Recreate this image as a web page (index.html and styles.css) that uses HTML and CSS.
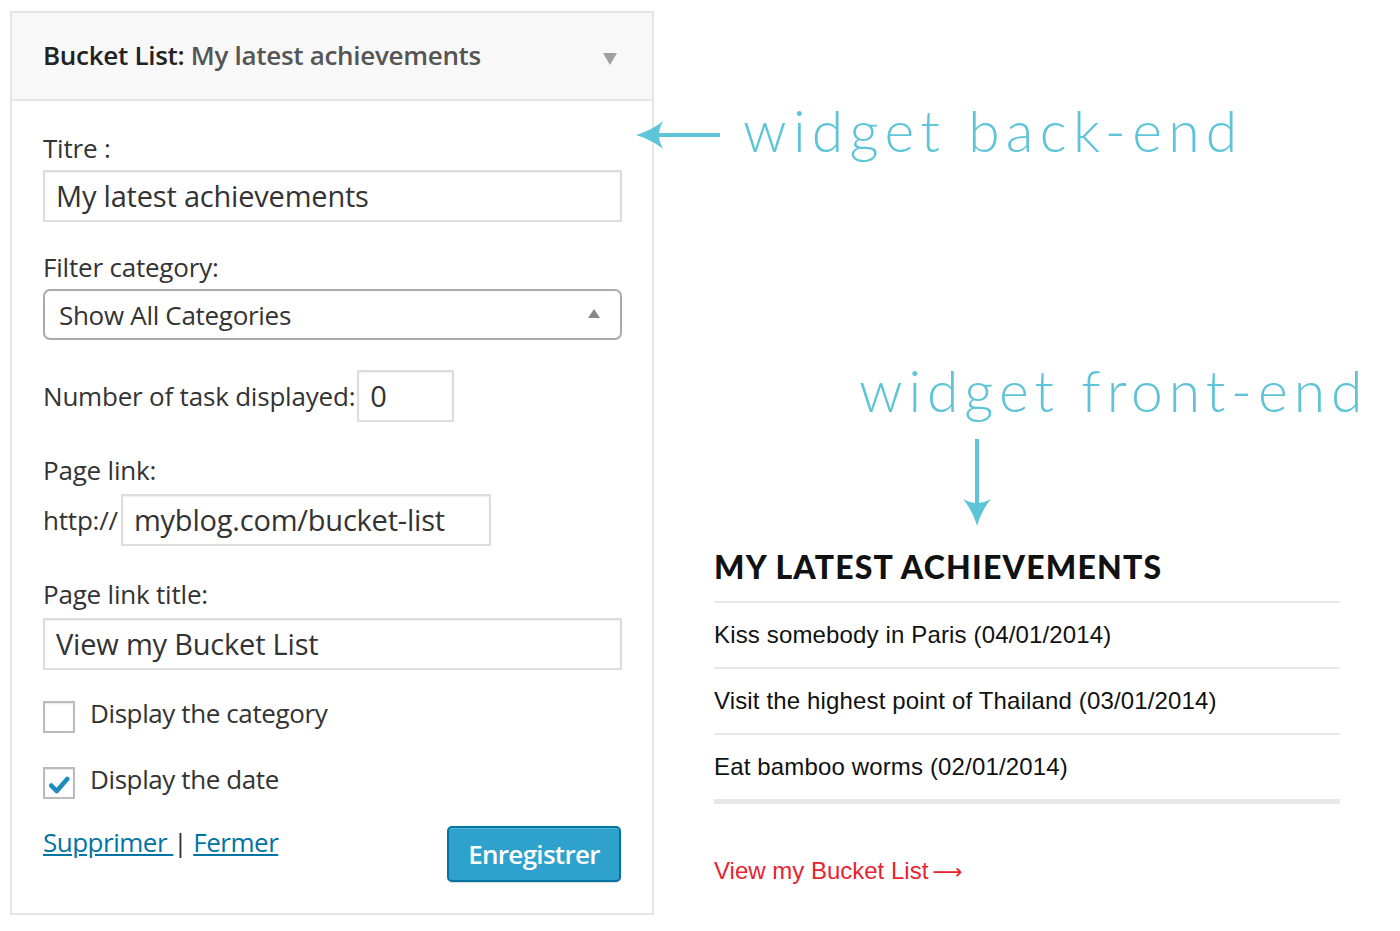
FILE: index.html
```html
<!DOCTYPE html>
<html lang="fr">
<head>
<meta charset="utf-8">
<title>Bucket List widget</title>
<link rel="stylesheet" href="styles.css">
</head>
<body>
<div class="page">
  <section class="panel">
    <header class="panel-head">
      <h4 class="panel-title">Bucket List:<span class="panel-title-sub"> My latest achievements</span></h4>
      <span class="panel-toggle"></span>
    </header>
    <div class="panel-body">
      <label class="label label-first">Titre :</label>
      <div class="input input-full">My latest achievements</div>

      <label class="label">Filter category:</label>
      <div class="select">
        <span>Show All Categories</span>
        <span class="select-arrow"></span>
      </div>

      <div class="row row-number">
        <span class="row-label">Number of task displayed:</span>
        <div class="input input-small">0</div>
      </div>

      <label class="label label-page">Page link:</label>
      <div class="row row-link">
        <span class="row-label">http://</span>
        <div class="input input-link">myblog.com/bucket-list</div>
      </div>

      <label class="label label-page">Page link title:</label>
      <div class="input input-full">View my Bucket List</div>

      <div class="check check-first">
        <span class="box"></span>
        <span class="check-label">Display the category</span>
      </div>
      <div class="check">
        <span class="box">
          <svg class="tick" viewBox="0 0 20 20" width="22" height="22"><path d="M3 10.5 L8 15.5 L17.5 4.5" fill="none" stroke="#1e8cbe" stroke-width="4.2" stroke-linecap="round" stroke-linejoin="round"/></svg>
        </span>
        <span class="check-label">Display the date</span>
      </div>

      <div class="panel-foot">
        <div class="links"><a class="link" href="#">Supprimer </a><span class="sep"> | </span><a class="link" href="#">Fermer</a></div>
        <button class="btn" type="button">Enregistrer</button>
      </div>
    </div>
  </section>

  <section class="front">
    <h2 class="front-title">MY LATEST ACHIEVEMENTS</h2>
    <ul class="front-list">
      <li>Kiss somebody in Paris (04/01/2014)</li>
      <li>Visit the highest point of Thailand (03/01/2014)</li>
      <li>Eat bamboo worms (02/01/2014)</li>
    </ul>
    <a class="front-link" href="#"><span>View my Bucket List</span><span class="front-arrow">&#10230;</span></a>
  </section>

  <div class="note note-back">
    <svg class="arrow-left" width="86" height="32" viewBox="0 0 86 32">
      <path d="M20 16 H84" stroke="#5ec4d8" stroke-width="4" fill="none"/>
      <path d="M0 16 C10 13 20 8 27 2 C24 8 23 12 23 16 C23 20 24 24 27 30 C20 24 10 19 0 16 Z" fill="#5ec4d8"/>
    </svg>
    <span class="note-text note-text-back">widget back-end</span>
  </div>

  <div class="note note-front">
    <span class="note-text note-text-front">widget front-end</span>
    <svg class="arrow-down" width="32" height="88" viewBox="0 0 32 88">
      <path d="M16 0 V70" stroke="#5ec4d8" stroke-width="4" fill="none"/>
      <path d="M16 87 C13 77 8 67 2 60 C8 63 12 64 16 64 C20 64 24 63 30 60 C24 67 19 77 16 87 Z" fill="#5ec4d8"/>
    </svg>
  </div>
</div>
</body>
</html>
```

FILE: styles.css
```css
* { box-sizing: border-box; }
html, body { margin: 0; padding: 0; background: #fff; }
body { font-family: "Open Sans", "Liberation Sans", sans-serif; color: #333; }

.page {
  position: relative;
  width: 1400px;
  height: 931px;
  display: flex;
  align-items: flex-start;
}

/* ---------- back-end panel ---------- */
.panel {
  margin: 11px 0 0 10px;
  width: 644px;
  height: 904px;
  border: 2px solid #e5e5e5;
  background: #fff;
  flex: none;
}
.panel-head {
  height: 88px;
  background: #f8f8f8;
  border-bottom: 2px solid #e5e5e5;
  display: flex;
  align-items: center;
  justify-content: space-between;
  padding: 0 35px 0 31px;
}
.panel-title {
  margin: -3px 0 0;
  font-size: 26px;
  font-weight: 600;
  color: #222;
  letter-spacing: -0.3px;
}
.panel-title-sub { color: #555; }
.panel-toggle {
  width: 0; height: 0;
  border-left: 7px solid transparent;
  border-right: 7px solid transparent;
  border-top: 12px solid #a0a0a0;
  margin-top: 6px;
}
.panel-body { padding: 0 31px; }

.label {
  display: block;
  font-size: 26px;
  line-height: 30px;
  color: #333;
  margin: 30px 0 7px;
  letter-spacing: -0.2px;
}
.label-first { margin-top: 32px; }
.label-page { margin-top: 33px; margin-bottom: 9px; }

.input {
  height: 52px;
  border: 2px solid #ddd;
  box-shadow: inset 0 1px 2px rgba(0,0,0,0.07);
  background: #fff;
  font-size: 29px;
  line-height: 48px;
  padding: 0 11px;
  color: #333;
  letter-spacing: -0.2px;
  white-space: nowrap;
}
.input-full { width: 579px; }
.input-small { width: 97px; }
.input-link { width: 370px; }

.select {
  width: 579px;
  height: 51px;
  border: 2px solid #aaa;
  border-radius: 7px;
  display: flex;
  align-items: center;
  justify-content: space-between;
  padding: 0 20px 0 14px;
  font-size: 26px;
  color: #333;
  letter-spacing: -0.3px;
}
.select-arrow {
  width: 0; height: 0;
  border-left: 6px solid transparent;
  border-right: 6px solid transparent;
  border-bottom: 9px solid #888;
  margin-bottom: 2px;
}

.row { display: flex; align-items: center; }
.row-number { margin-top: 30px; gap: 2px; }
.row-link { gap: 3px; }
.row-label { font-size: 26px; color: #333; letter-spacing: -0.2px; }

.check { display: flex; align-items: flex-start; gap: 15px; margin-top: 34px; height: 32px; }
.check-first { margin-top: 31px; }
.box {
  width: 32px; height: 32px;
  border: 2px solid #bbb;
  box-shadow: inset 0 1px 2px rgba(0,0,0,0.1);
  display: flex; align-items: center; justify-content: center;
  background: #fff;
  flex: none;
}
.tick { display: block; margin-top: 3px; }
.check-label { font-size: 26px; line-height: 32px; margin-top: -4px; color: #333; letter-spacing: -0.4px; }

.panel-foot {
  display: flex;
  justify-content: space-between;
  align-items: flex-start;
  margin-top: 27px;
}
.links { font-size: 26px; line-height: 32px; color: #333; letter-spacing: -0.5px; }
.link { color: #0074a2; text-decoration: underline; }
.sep { color: #333; }
.btn {
  width: 174px;
  height: 56px;
  background: #2ea2cc;
  border: 2px solid #0074a2;
  border-radius: 5px;
  box-shadow: inset 0 1px 0 rgba(120,200,230,0.5), 0 1px 0 rgba(0,0,0,0.15);
  color: #fff;
  font-family: "Open Sans", sans-serif;
  font-size: 26px;
  font-weight: 600;
  letter-spacing: -0.7px;
  padding: 0;
}

/* ---------- front-end widget ---------- */
.front {
  margin: 547px 0 0 60px;
  width: 626px;
  flex: none;
}
.front-title {
  margin: 0;
  font-family: "Lato", "Liberation Sans", sans-serif;
  font-weight: 900;
  font-size: 32px;
  letter-spacing: 1.2px;
  line-height: 40px;
  color: #111;
  padding-bottom: 14px;
  border-bottom: 2px solid #e8e8e8;
}
.front-list {
  list-style: none;
  margin: 0;
  padding: 0;
  border-bottom: 5px solid #e8e8e8;
}
.front-list li {
  font-family: "Liberation Sans", Arial, sans-serif;
  font-size: 24px;
  height: 66px;
  line-height: 64px;
  color: #111;
  letter-spacing: 0.15px;
  border-bottom: 2px solid #e8e8e8;
}
.front-list li:last-child { height: 64px; border-bottom: 0; }
.front-link {
  display: inline-flex;
  align-items: baseline;
  gap: 4px;
  margin-top: 52px;
  font-family: "Liberation Sans", Arial, sans-serif;
  font-size: 24px;
  line-height: 30px;
  color: #e8232f;
  text-decoration: none;
  letter-spacing: 0;
}
.front-arrow { font-family: "DejaVu Sans", sans-serif; font-size: 21px; }

/* ---------- annotations ---------- */
.note { position: absolute; display: flex; color: #5ec4d8; }
.note-text {
  font-family: "Lato", "Roboto", sans-serif;
  font-weight: 300;
  font-size: 57px;
  line-height: 1;
  white-space: nowrap;
}
.note-text-back { letter-spacing: 6.3px; }
.note-text-front { letter-spacing: 5.9px; }
.note-back { left: 636px; top: 102px; align-items: center; gap: 21px; }
.arrow-left { display: block; margin-top: 8px; }
.note-front { left: 859px; top: 362px; flex-direction: column; align-items: flex-start; }
.arrow-down { display: block; margin: 20px 0 0 102px; }
```
